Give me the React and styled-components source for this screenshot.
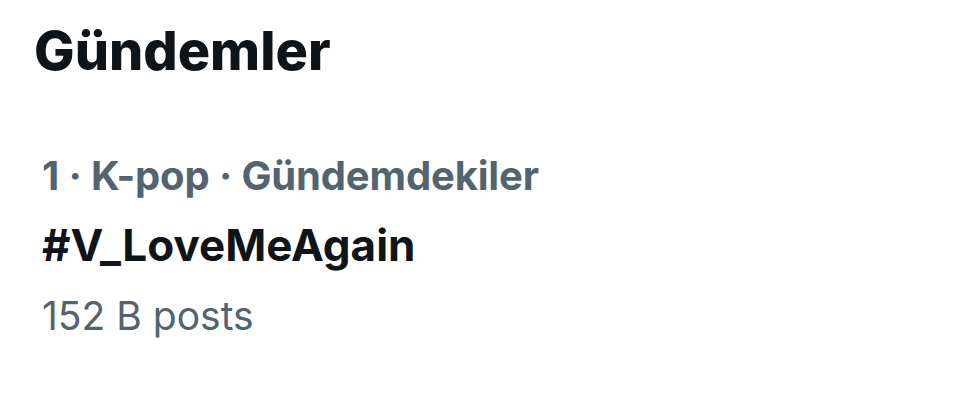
import React from "react";
import styled, { createGlobalStyle } from "styled-components";

const GlobalStyle = createGlobalStyle`
  html, body {
    margin: 0;
    padding: 0;
    background: #ffffff;
  }
  body {
    font-family: Inter, "Liberation Sans", Arial, sans-serif;
    -webkit-font-smoothing: antialiased;
  }
`;

const StPanel = styled.section`
  width: 976px;
  height: 416px;
  box-sizing: border-box;
  padding: 18px 34px 0;
  background: #fff;
`;

const StTitle = styled.h2`
  margin: 0;
  font-size: 54px;
  font-weight: 800;
  line-height: 66px;
  color: #0f1419;
`;

const StTrend = styled.div`
  display: flex;
  flex-direction: column;
  padding: 68px 8px 0;
`;

const StContext = styled.span`
  font-size: 40px;
  font-weight: 700;
  line-height: 48px;
  letter-spacing: -0.15px;
  color: #536471;
`;

const StName = styled.span`
  margin-top: 19px;
  font-size: 44px;
  font-weight: 700;
  line-height: 52px;
  color: #0f1419;
`;

const StCount = styled.span`
  margin-top: 21px;
  font-size: 39px;
  font-weight: 400;
  line-height: 48px;
  color: #536471;
`;

function App() {
  return (
    <>
      <GlobalStyle />
      <StPanel>
        <StTitle>Gündemler</StTitle>
        <StTrend>
          <StContext>1 · K-pop · Gündemdekiler</StContext>
          <StName>#V_LoveMeAgain</StName>
          <StCount>152 B posts</StCount>
        </StTrend>
      </StPanel>
    </>
  );
}

export default App;
